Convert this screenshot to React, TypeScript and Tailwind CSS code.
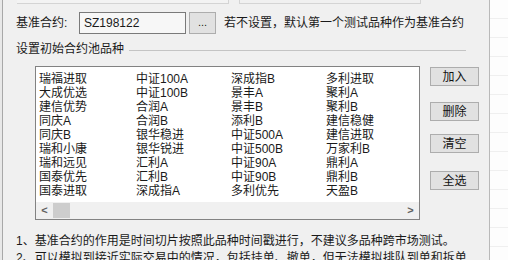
import React from 'react';

const rows: string[][] = [
  ['瑞福进取', '中证100A', '深成指B', '多利进取'],
  ['大成优选', '中证100B', '景丰A', '聚利A'],
  ['建信优势', '合润A', '景丰B', '聚利B'],
  ['同庆A', '合润B', '添利B', '建信稳健'],
  ['同庆B', '银华稳进', '中证500A', '建信进取'],
  ['瑞和小康', '银华锐进', '中证500B', '万家利B'],
  ['瑞和远见', '汇利A', '中证90A', '鼎利A'],
  ['国泰优先', '汇利B', '中证90B', '鼎利B'],
  ['国泰进取', '深成指A', '多利优先', '天盈B'],
];

const font = { fontFamily: '"Liberation Sans", "Noto Sans CJK SC", sans-serif' };

const SideButton: React.FC<{ label: string; className?: string }> = ({ label, className }) => (
  <button
    className={`w-[49px] h-[19px] border border-[#adadad] bg-[#e1e1e1] text-[12px] leading-none text-[#111] flex items-center justify-center ${className ?? ''}`}
  >
    {label}
  </button>
);

export default function App() {
  return (
    <div className="w-[508px] h-[260px] flex overflow-hidden bg-white text-[#1a1a1a]" style={font}>
      {/* left edge of window */}
      <div className="w-[3px] bg-[#e8e8e8] border-r border-[#a8a8a8] shrink-0" />

      {/* dialog panel */}
      <div className="w-[487px] shrink-0 bg-[#f0f0f0] border-r border-[#b9b9b9] flex flex-col">
        {/* bottom of previous group */}
        <div className="h-[5px] flex">
          <div className="ml-[14px] w-[212px] h-[4px] border-b border-r border-[#d4d4d4] bg-[#f3f3f3]" />
          <div className="ml-[10px] w-[182px] h-[4px] border-b border-l border-r border-[#d4d4d4]" />
        </div>

        {/* base contract row */}
        <div className="mt-[8px] h-[22px] flex items-center">
          <span className="ml-[13px] w-[63px] text-[12px]">基准合约:</span>
          <div className="w-[107px] h-[22px] border border-[#7a7a7a] bg-[#f7f7f7] flex items-center pl-[4px] text-[12px]">
            SZ198122
          </div>
          <button className="ml-[3px] w-[27px] h-[22px] border border-[#adadad] bg-[#e1e1e1] text-[11px] leading-none pb-[2px] flex items-center justify-center">
            ...
          </button>
          <span className="ml-[8px] text-[12px]">若不设置，默认第一个测试品种作为基准合约</span>
        </div>

        {/* group caption */}
        <div className="mt-[7px] h-[16px] flex items-center">
          <span className="ml-[13px] text-[12px]">设置初始合约池品种</span>
          <div className="ml-[5px] w-[337px] border-t border-[#c4c4c4] mt-[3px]" />
        </div>

        {/* list + buttons */}
        <div className="mt-[9px] flex">
          <div className="ml-[32px] w-[385px] h-[154px] border border-[#828282] bg-white flex flex-col">
            <div className="flex-1 pt-[5px] pl-[3px]">
              {rows.map((r, i) => (
                <div key={i} className="flex h-[14px] items-center text-[12px] leading-none">
                  <span className="w-[97px]">{r[0]}</span>
                  <span className="w-[95px]">{r[1]}</span>
                  <span className="w-[95px]">{r[2]}</span>
                  <span>{r[3]}</span>
                </div>
              ))}
            </div>
            <div className="h-[17px] bg-[#f0f0f0] flex items-center text-[#606060]">
              <span className="w-[17px] text-center text-[11px] font-bold">&lt;</span>
              <div className="w-[17px] h-[15px] bg-[#cdcdcd]" />
              <div className="flex-1" />
              <span className="w-[17px] text-center text-[11px] font-bold">&gt;</span>
            </div>
          </div>

          <div className="ml-[10px] flex flex-col">
            <SideButton label="加入" className="mt-[1px]" />
            <SideButton label="删除" className="mt-[16px]" />
            <SideButton label="清空" className="mt-[13px]" />
            <SideButton label="全选" className="mt-[18px]" />
          </div>
        </div>

        {/* notes */}
        <div className="mt-[13px] ml-[13px] text-[12px] leading-[17px] whitespace-nowrap">
          <div>1、基准合约的作用是时间切片按照此品种时间戳进行，不建议多品种跨市场测试。</div>
          <div>2、可以模拟到接近实际交易中的情况，包括挂单、撤单，但无法模拟排队到单和拆单</div>
        </div>
      </div>

      {/* window behind */}
      <div className="flex-1 bg-[#fdfdfd] flex flex-col">
        {Array.from({ length: 14 }).map((_, i) => (
          <div key={i} className="h-[19px] border-b border-[#efefef] shrink-0" />
        ))}
      </div>
    </div>
  );
}
